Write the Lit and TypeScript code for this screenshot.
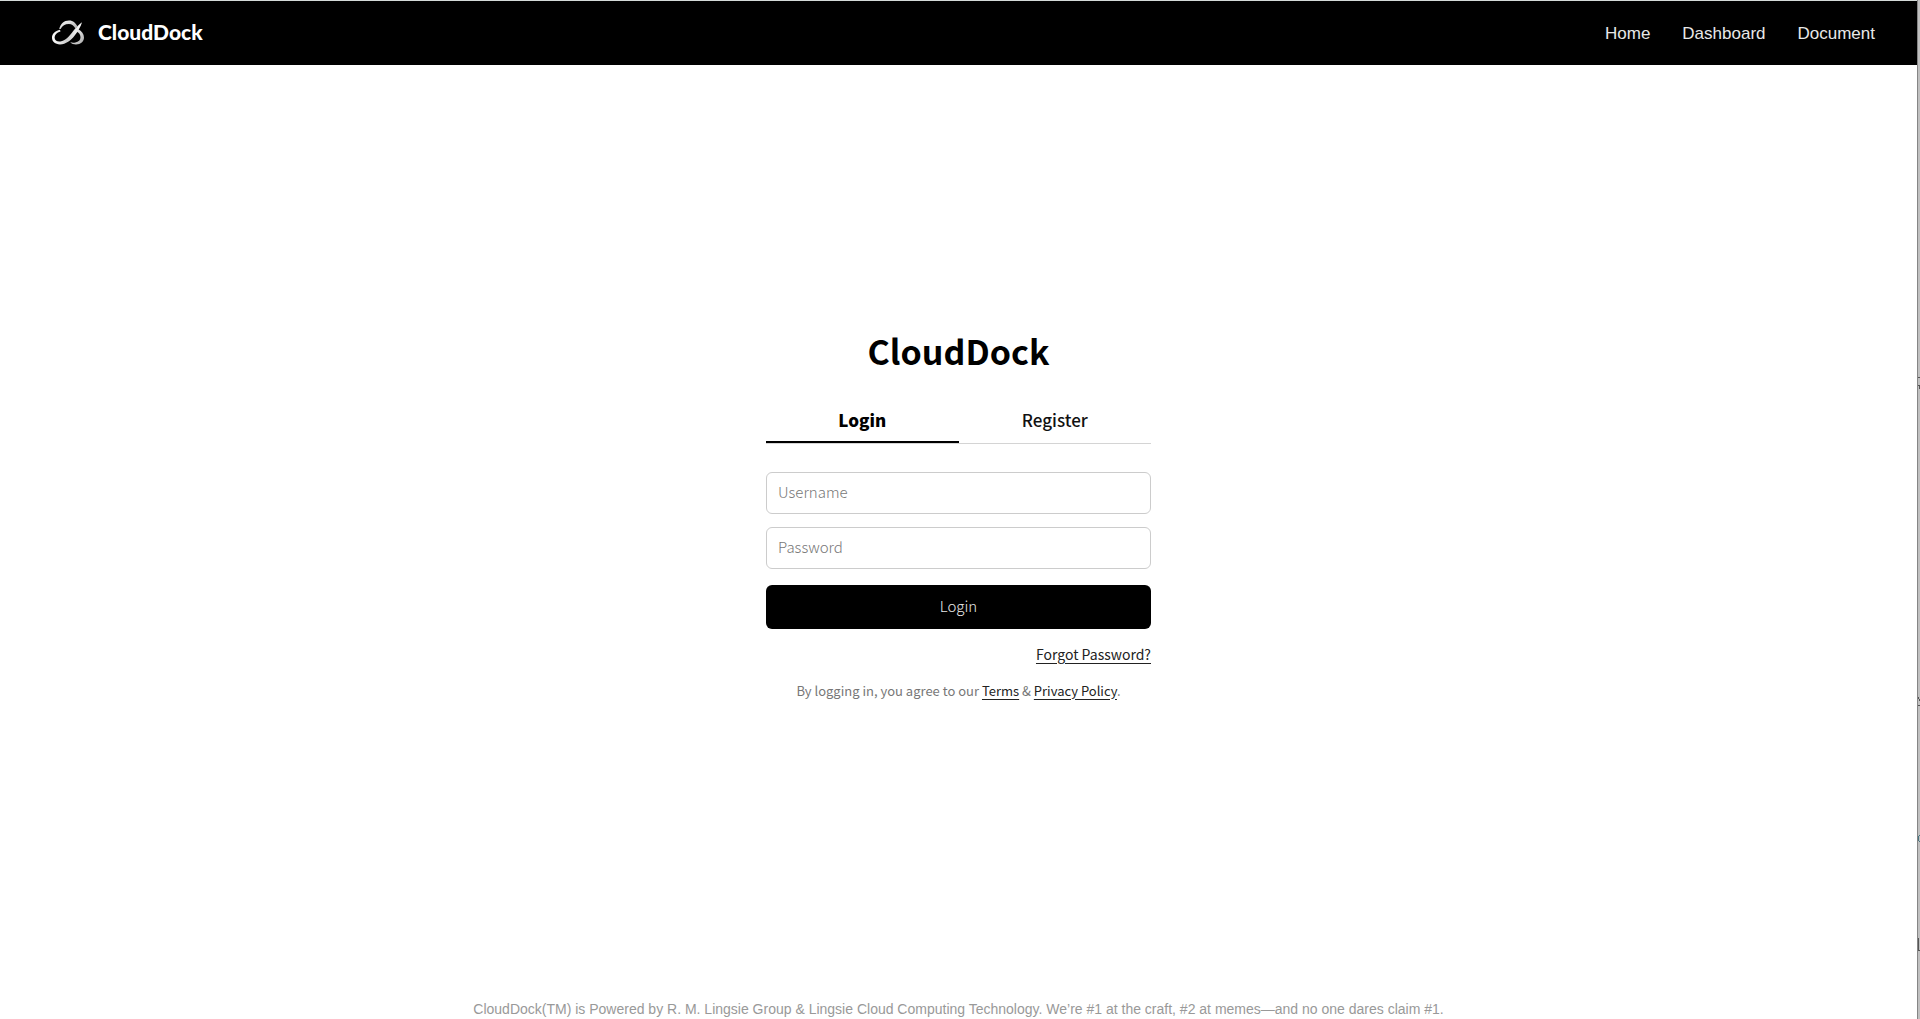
import { LitElement, html, css, svg } from "lit";
import { customElement, state } from "lit/decorators.js";

const cloudMark = svg`
  <defs>
    <linearGradient id="ribbon" x1="0" y1="0" x2="1" y2="0">
      <stop offset="0" stop-color="#ffffff" />
      <stop offset="0.5" stop-color="#cccccc" />
      <stop offset="1" stop-color="#ffffff" />
    </linearGradient>
    <linearGradient id="tail" x1="0" y1="0" x2="1" y2="1">
      <stop offset="0" stop-color="#ffffff" />
      <stop offset="1" stop-color="#a8a8a8" />
    </linearGradient>
  </defs>
  <path fill="url(#ribbon)" d="M8 9.800C3 10.800 0 14 0 17.800C0 21.600 3.200 24.400 8 24.400C14 24.400 19 20.400 22.500 15.800C25.500 11.800 28.800 6.500 30 2.200C27 4.300 24.300 7 21.200 11C17.200 16.200 13.500 20.800 8.300 21.500C5 21.800 2.600 20.300 2.600 17.600C2.600 14.900 4.600 12.500 8.500 11.400Z" />
  <path fill="url(#tail)" d="M7.200 9C8.500 3.800 12 0.500 17 0.500C21.200 0.500 24 3.200 25.400 6.500L23.600 8.800C21.800 5.700 20 4 16.800 4C13 4 10.500 5.800 8.600 9Z" />
  <path fill="url(#tail)" d="M26.200 9.200C29.700 11 32 13.700 32 17.500C32 21.600 28.800 24.500 24 24.500C21.800 24.500 19.600 23.700 18.200 22.300C20 22.900 21.800 22.900 23.300 22.500C26.600 21.800 28.500 20.100 28.500 17.300C28.500 14.700 27 12.900 24.400 11.600Z" />`;

@customElement("app-root")
export class AppRoot extends LitElement {
  @state() private mode: "login" | "register" = "login";

  static styles = css`
    :host {
      display: flex;
      min-height: 100vh;
      background: #fff;
      color: #000;
      font-family: "Noto Sans CJK SC", "Noto Sans", sans-serif;
    }
    * {
      box-sizing: border-box;
    }
    .page {
      flex: 1;
      display: flex;
      flex-direction: column;
      border-top: 1px solid #d4dad8;
    }
    .edge {
      width: 3px;
      background: #c0c0c0;
      border-left: 1px solid #858585;
    }
    .ticks {
      display: block;
      width: 2px;
      height: 960px;
    }
    header {
      display: flex;
      align-items: center;
      justify-content: space-between;
      height: 64px;
      padding: 0 42px 0 52px;
      background: #000;
    }
    .brand {
      display: flex;
      align-items: center;
      gap: 14px;
      padding-bottom: 2px;
      color: #fff;
      text-decoration: none;
      font: 900 21px/24px Lato, sans-serif;
    }
    .mark {
      width: 32px;
      height: 25px;
    }
    nav {
      display: flex;
      gap: 32px;
      padding-top: 2px;
      font: 17px/24px "Liberation Sans", Arial, sans-serif;
    }
    nav a {
      color: #e8e8e8;
      text-decoration: none;
    }
    main {
      flex: 1;
      display: flex;
      justify-content: center;
      align-items: center;
      padding-bottom: 42px;
    }
    .card {
      width: 385px;
      max-width: 100%;
    }
    h1 {
      margin: 0 0 24px;
      padding-top: 2px;
      font-size: 34px;
      line-height: 52px;
      font-weight: 700;
      text-align: center;
    }
    .tabs {
      display: flex;
      height: 43px;
      margin-bottom: 28px;
      border-bottom: 1px solid #d4d4d4;
    }
    .tab {
      flex: 1;
      padding: 0 0 2px;
      border: 0;
      border-bottom: 2px solid transparent;
      background: none;
      color: #111;
      font: 500 17px/26px "Noto Sans CJK SC", sans-serif;
      cursor: pointer;
    }
    .tab.active {
      border-bottom-color: #000;
      color: #000;
      font-weight: 900;
    }
    form {
      display: flex;
      flex-direction: column;
    }
    .field {
      height: 42px;
      margin-bottom: 13px;
      padding: 0 11px 2px;
      border: 1px solid #ccc;
      border-radius: 6px;
      background: #fff;
      color: #222;
      font: 300 15px/24px "Noto Sans CJK SC", sans-serif;
    }
    .field::placeholder {
      color: #777;
      opacity: 1;
    }
    .submit {
      height: 44px;
      margin: 3px 0 13px;
      padding: 0 0 2px;
      border: 0;
      border-radius: 6px;
      background: #000;
      color: #e8e8e8;
      font: 300 15px/24px "Noto Sans CJK SC", sans-serif;
      cursor: pointer;
    }
    .forgot,
    .terms a {
      color: #222;
      text-decoration: underline;
      text-underline-offset: 3px;
    }
    .forgot {
      align-self: flex-end;
      font-size: 14px;
      line-height: 24px;
    }
    .terms {
      margin: 15px 0 0;
      color: #777;
      font-size: 13px;
      line-height: 20px;
      text-align: center;
    }
    footer {
      padding-bottom: 1px;
      color: #999;
      font: 14px/18px "Liberation Sans", Arial, sans-serif;
      text-align: center;
    }
  `;

  private tab(id: "login" | "register", label: string) {
    const active = this.mode === id;
    return html`<button
      class="tab ${active ? "active" : ""}"
      type="button"
      role="tab"
      aria-selected=${active}
      @click=${() => (this.mode = id)}
    >${label}</button>`;
  }

  render() {
    return html`
      <div class="page">
        <header>
          <a class="brand" href="#home">
            <svg class="mark" viewBox="0 0 32 25" aria-hidden="true">${cloudMark}</svg>
            <span>CloudDock</span>
          </a>
          <nav>
            <a href="#home">Home</a>
            <a href="#dashboard">Dashboard</a>
            <a href="#document">Document</a>
          </nav>
        </header>
        <main>
          <section class="card">
            <h1>CloudDock</h1>
            <div class="tabs" role="tablist">
              ${this.tab("login", "Login")}${this.tab("register", "Register")}
            </div>
            <form @submit=${(e: Event) => e.preventDefault()}>
              <input class="field" type="text" placeholder="Username" aria-label="Username" />
              <input class="field" type="password" placeholder="Password" aria-label="Password" />
              <button class="submit" type="submit">${this.mode === "login" ? "Login" : "Register"}</button>
              <a class="forgot" href="#forgot">Forgot Password?</a>
            </form>
            <p class="terms">By logging in, you agree to our <a href="#terms">Terms</a> &amp; <a href="#privacy">Privacy Policy</a>.</p>
          </section>
        </main>
        <footer>CloudDock(TM) is Powered by R. M. Lingsie Group &amp; Lingsie Cloud Computing Technology. We’re #1 at the craft, #2 at memes—and no one dares claim #1.</footer>
      </div>
      <div class="edge">
        <svg class="ticks" viewBox="0 0 2 960" aria-hidden="true">
          <path fill="#555" d="M0 377h2v1h-2zM0 385h2v1h-2zM1 386h1v3h-1zM0 697h1v2h-1zM1 699h1v2h-1zM0 705h2v1h-2zM0 938h1v13h-1zM0 950h2v1h-2z" />
          <path fill="#477681" d="M1 835h1v1h-1zM0 836h1v5h-1zM1 841h1v1h-1z" />
        </svg>
      </div>
    `;
  }
}
